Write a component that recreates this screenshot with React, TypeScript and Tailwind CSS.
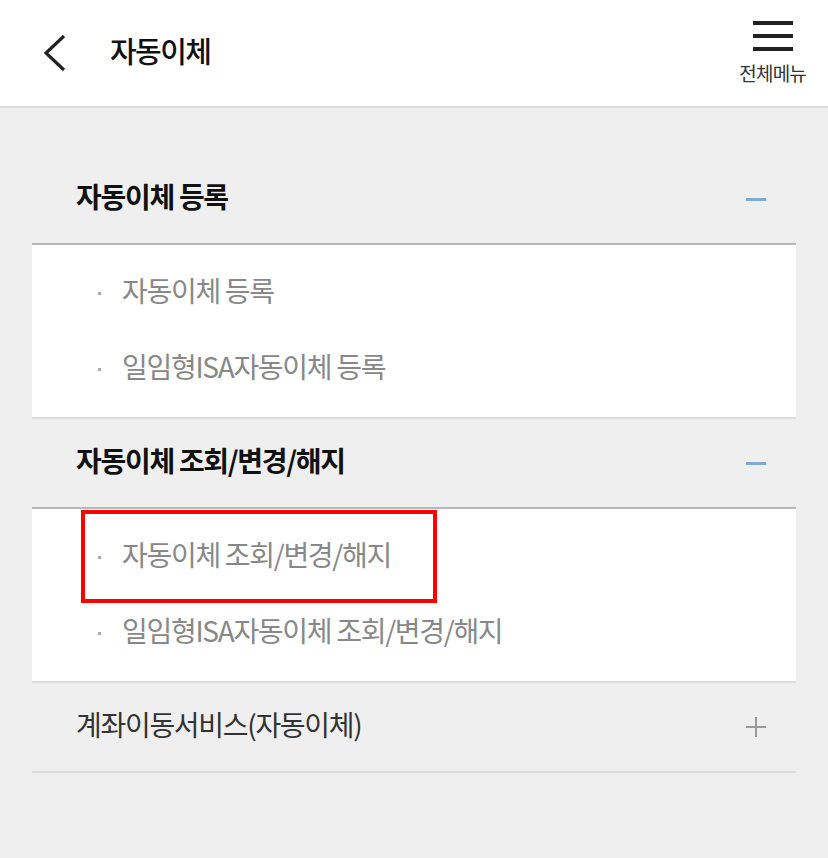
import React from "react";

const font = { fontFamily: '"Noto Sans CJK KR", "Noto Sans", sans-serif' };

type Section = {
  title: string;
  open: boolean;
  items: string[];
  marked?: number;
};

const sections: Section[] = [
  { title: "자동이체 등록", open: true, items: ["자동이체 등록", "일임형ISA자동이체 등록"] },
  {
    title: "자동이체 조회/변경/해지",
    open: true,
    items: ["자동이체 조회/변경/해지", "일임형ISA자동이체 조회/변경/해지"],
    marked: 0,
  },
  { title: "계좌이동서비스(자동이체)", open: false, items: [] },
];

function Header() {
  return (
    <header className="h-[108px] bg-white border-b-2 border-[#dcdcdc] flex items-center justify-between">
      <div className="flex items-center">
        <svg width="26" height="38" viewBox="0 0 26 38" className="ml-[42px]">
          <polyline points="22,2 4,19 22,36" fill="none" stroke="#222" strokeWidth="3.2" />
        </svg>
        <h1 className="ml-[42px] text-[29px] tracking-[-1.6px] font-medium text-[#111] -mt-[4px]">
          자동이체
        </h1>
      </div>
      <button className="mr-[22px] flex flex-col items-center self-start pt-[21px]">
        <span className="flex flex-col gap-[9.5px] w-[40px]">
          <span className="h-[3.5px] bg-[#222]" />
          <span className="h-[3.5px] bg-[#222]" />
          <span className="h-[3.5px] bg-[#222]" />
        </span>
        <span className="mt-[12px] text-[19px] tracking-[-0.8px] text-[#333] leading-none">전체메뉴</span>
      </button>
    </header>
  );
}

function SectionBlock({ s }: { s: Section }) {
  return (
    <div>
      <div
        className={
          "h-[90px] flex items-center justify-between pl-[44px] pr-[30px] border-b-2 " +
          (s.open ? "border-[#b8b8b8]" : "border-[#dcdcdc]")
        }
      >
        <span
          className={
            "text-[28px] tracking-[-1.3px] -mt-[6px] " +
            (s.open ? "font-bold text-[#111]" : "font-normal text-[#333]")
          }
        >
          {s.title}
        </span>
        {s.open ? (
          <span className="w-[20px] h-[3px] bg-[#7aaed8]" />
        ) : (
          <span className="relative w-[20px] h-[20px]">
            <span className="absolute left-0 top-[9px] w-[20px] h-[2px] bg-[#9a9a9a]" />
            <span className="absolute top-0 left-[9px] w-[2px] h-[20px] bg-[#9a9a9a]" />
          </span>
        )}
      </div>
      {s.open && (
        <div className="relative bg-white pt-[8px] pb-[12px] border-b-2 border-[#dcdcdc]">
          {s.items.map((it) => (
            <div key={it} className="h-[76px] flex items-center pl-[66px]">
              <span className="w-[3px] h-[3px] bg-[#aaa] mt-[4px]" />
              <span className="ml-[21px] text-[28px] tracking-[-1.3px] text-[#888] -mt-[2px]">{it}</span>
            </div>
          ))}
          {s.marked !== undefined && (
            <div className="absolute top-[1px] left-[49px] w-[356px] h-[93px] border-4 border-[#ff0000]" />
          )}
        </div>
      )}
    </div>
  );
}

export default function App() {
  return (
    <div style={font} className="w-[828px] h-[858px] bg-[#efefef] overflow-hidden">
      <Header />
      <main className="px-[32px] pt-[47px]">
        {sections.map((s) => (
          <SectionBlock key={s.title} s={s} />
        ))}
      </main>
    </div>
  );
}
